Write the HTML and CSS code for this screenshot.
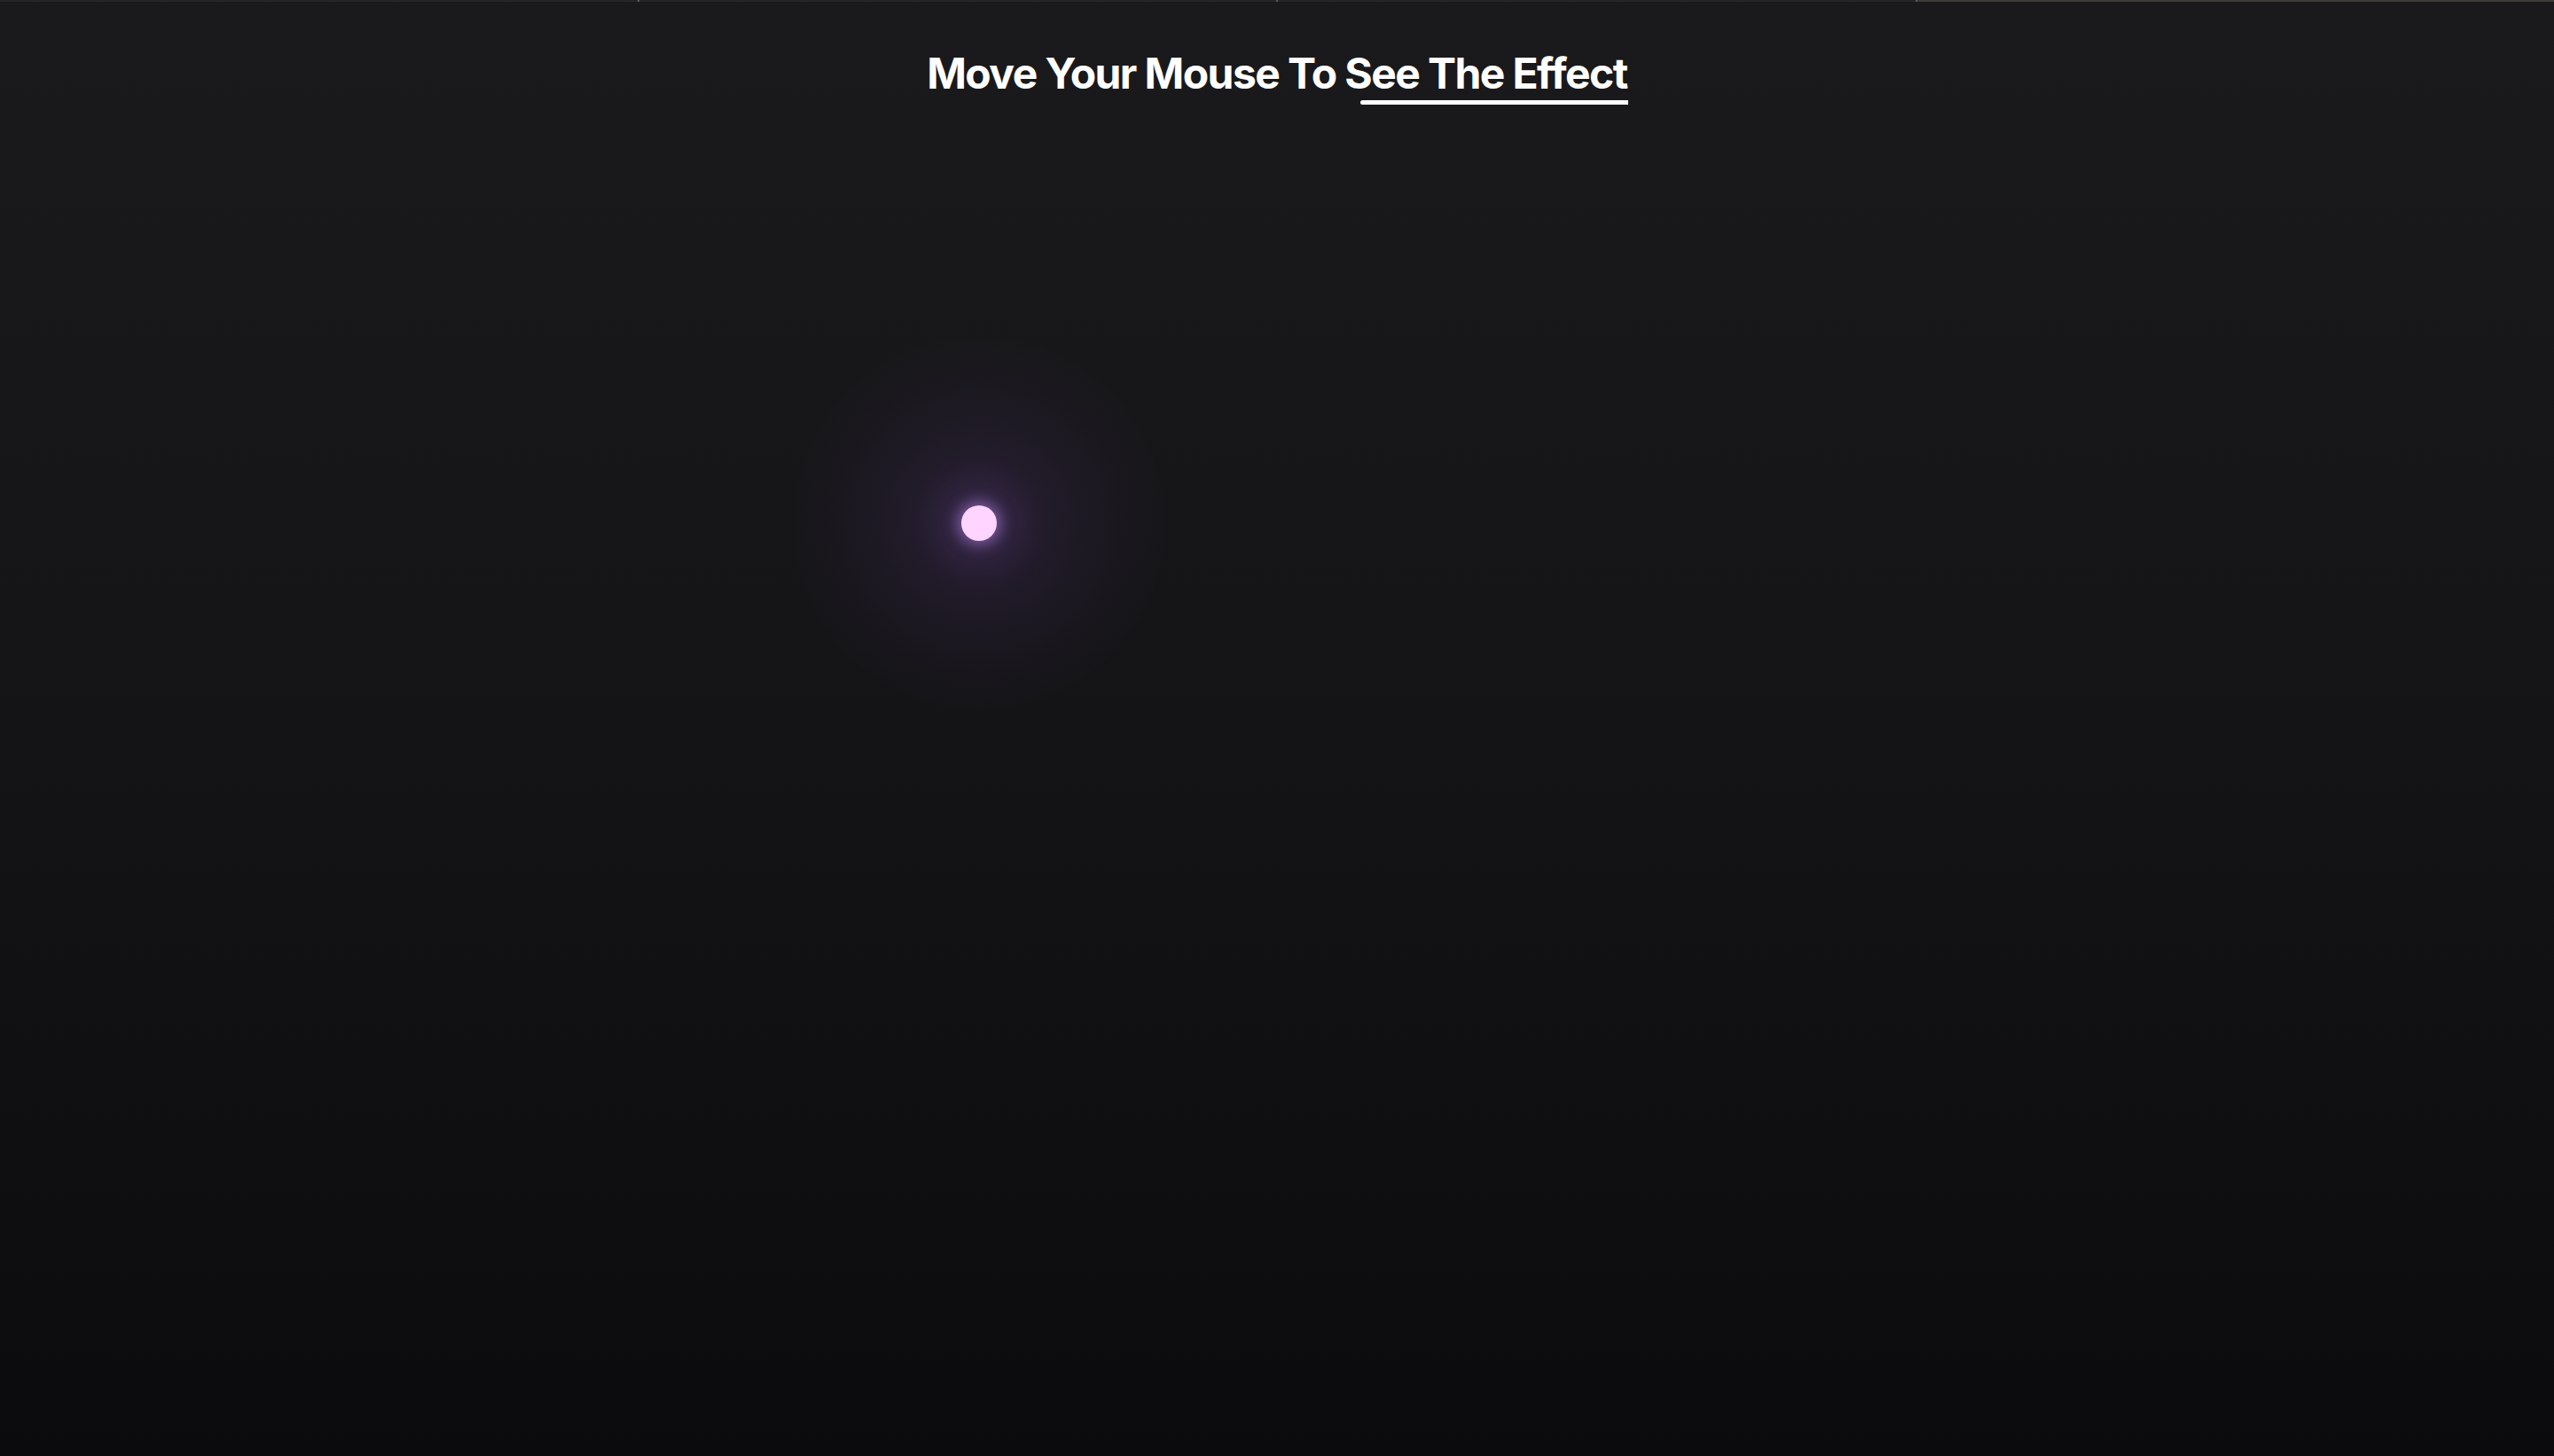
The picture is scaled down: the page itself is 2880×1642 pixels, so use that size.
FILE: index.html
```html
<!DOCTYPE html>
<html lang="en">
<head>
<meta charset="utf-8">
<title>Move Your Mouse</title>
<link rel="stylesheet" href="styles.css">
</head>
<body>
<div class="topbar">
  <div class="seg"></div>
  <div class="tick"></div>
  <div class="seg"></div>
  <div class="tick"></div>
  <div class="seg"></div>
  <div class="tick"></div>
  <div class="seg seg-light"></div>
</div>
<main class="stage">
  <h1 class="title">Move Your Mouse To <span class="hl">See The Effect</span></h1>
  <div class="glow"></div>
  <div class="cursor-dot"></div>
</main>
</body>
</html>
```
FILE: styles.css
```css
html, body {
  margin: 0;
  padding: 0;
  height: 100%;
}
body {
  background: linear-gradient(180deg, #1a1a1c 0%, #141416 50%, #0b0b0d 100%);
  font-family: Inter, "Liberation Sans", sans-serif;
  color: #ffffff;
  overflow: hidden;
  position: relative;
}
.topbar {
  display: flex;
  height: 2px;
  width: 100%;
}
.seg {
  flex: 1;
  background: #262626;
}
.seg-light {
  background: #3e3b39;
}
.tick {
  width: 2px;
  background: #5a5a5a;
}
.stage {
  display: flex;
  justify-content: center;
  padding-top: 57px;
}
.title {
  margin: 0;
  font-size: 48px;
  line-height: 48px;
  font-weight: 700;
  letter-spacing: -0.033em;
}
.hl {
  position: relative;
}
.hl::after {
  content: "";
  position: absolute;
  left: 18px;
  right: -1px;
  top: 60px;
  height: 5px;
  border-radius: 3px 0 0 3px;
  background: #ffffff;
}
.glow {
  position: absolute;
  left: 894px;
  top: 380px;
  width: 420px;
  height: 420px;
  border-radius: 50%;
  background: radial-gradient(circle, rgba(150, 90, 210, 0.2) 0%, rgba(120, 70, 180, 0.1) 30%, rgba(90, 50, 140, 0.035) 60%, rgba(0, 0, 0, 0) 75%);
}
.cursor-dot {
  position: absolute;
  left: 1084px;
  top: 570px;
  width: 40px;
  height: 40px;
  border-radius: 50%;
  background: #ffd4ff;
  box-shadow: 0 0 16px 4px rgba(190, 140, 240, 0.55), 0 0 50px 16px rgba(140, 90, 200, 0.2);
}
```
